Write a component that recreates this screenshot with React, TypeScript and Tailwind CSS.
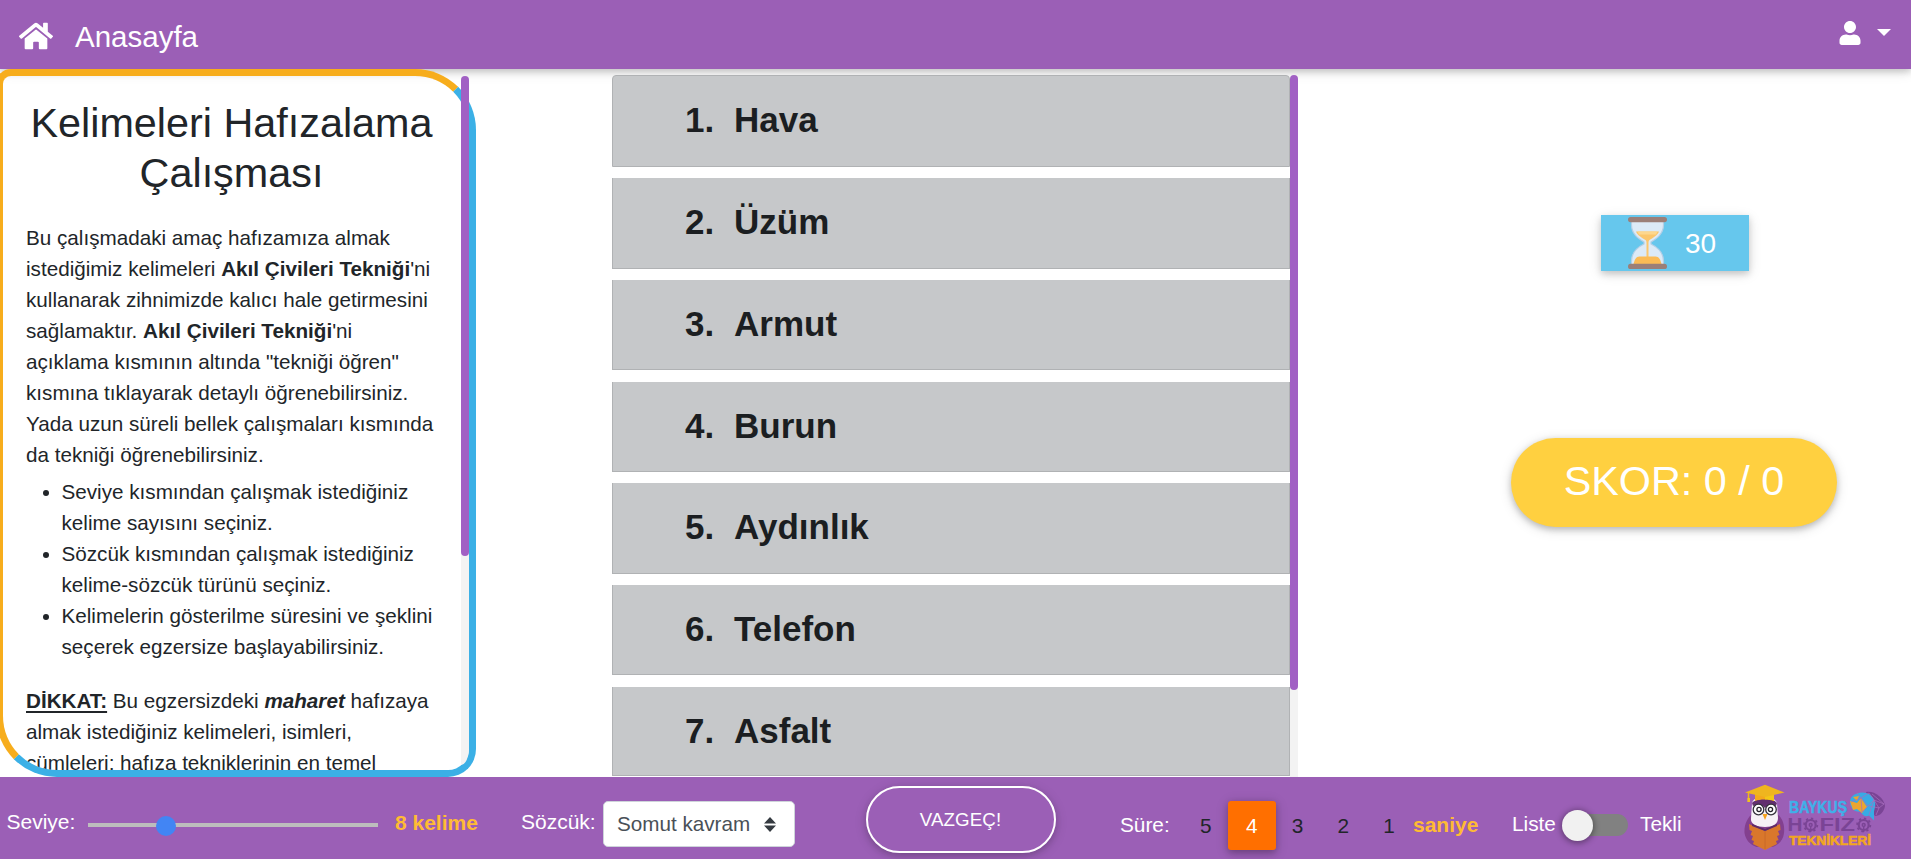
import React from 'react';
import { FaHome, FaUser } from 'react-icons/fa';

const words = ['Hava', 'Üzüm', 'Armut', 'Burun', 'Aydınlık', 'Telefon', 'Asfalt'];
const seconds = [5, 4, 3, 2, 1];

function Hourglass() {
  return (
    <svg className="h-[52px] w-[39px] shrink-0" viewBox="0 0 39 52">
      <path d="M3.500 4h32v4c0 9-7 13.500-12.500 17v2C29 30 35.500 35 35.500 44v4h-32v-4C3.500 35 10 30 16 27v-2C10.500 21.500 3.500 17 3.500 8z" fill="#dceaf7" stroke="#b3cfe6" strokeWidth="1.200" />
      <path d="M8 14.500h23c-1.500 4-6.500 6.500-9.500 8.500-.8.700-1 1.500-1 3V42h-2V26c0-1.500-.2-2.300-1-3-3-2-8-4.500-9.500-8.500z" fill="#fbc66c" />
      <path d="M9.500 14.500h20l-1.500 3H11z" fill="#fdd78e" />
      <path d="M5.500 47c1-4 2.500-7.500 6-7.500h16c3.500 0 5 3.500 6 7.500z" fill="#fbbb55" />
      <rect x="0" y="0" width="39" height="5.200" rx="2.600" fill="#9b7f78" />
      <rect x="0" y="46.800" width="39" height="5.200" rx="2.600" fill="#9b7f78" />
    </svg>
  );
}

function Gear({ x }: { x: number }) {
  return (
    <g transform={`translate(${x} 41)`} fill="none" stroke="#7a4495">
      <circle r="5" strokeWidth="2.200" />
      <circle r="6.600" strokeWidth="1.800" strokeDasharray="2.300 2.880" />
      <circle r="1.400" strokeWidth="1.500" />
      <path d="M0 2v5" strokeWidth="1.400" />
    </g>
  );
}

function Logo() {
  return (
    <svg className="h-[68px] w-[144px] shrink-0" viewBox="0 0 144 68">
      {/* owl body and wings */}
      <path d="M9 29C3 34 0 41 .5 49c1 7 6 12 12 14h16c6-2 11-7 11.500-14C41 40 38 33 32 29z" fill="#83408f" />
      <path d="M8 20c0-4 4-7 12-7s13 3 13 7l1 14c0 6-5 9-13 9S6 40 7 34z" fill="#f6f1f6" />
      <path d="M8 19c4-5 20-6 25 0l-1 3c-4-2-8-2-11 2-3-4-8-4-12-2z" fill="#62306f" />
      <circle cx="14.500" cy="25.500" r="5.300" fill="#fff" stroke="#35323c" strokeWidth="1.300" />
      <circle cx="27" cy="25.500" r="5.300" fill="#fff" stroke="#35323c" strokeWidth="1.300" />
      <circle cx="15" cy="25.500" r="2.100" fill="none" stroke="#25232b" strokeWidth="1.300" />
      <circle cx="26.500" cy="25.500" r="2.100" fill="none" stroke="#25232b" strokeWidth="1.300" />
      <path d="M18.500 30h5L21 36z" fill="#f5a21d" />
      {/* graduation cap */}
      <path d="M11 8h19v9c-5-2-14-2-19 0z" fill="#f5a81c" />
      <path d="M21 9h9v8c-2-1-6-1.500-9-1.500z" fill="#f3c717" />
      <path d="M1 8.500 21 .8l19.500 7.700L21 13z" fill="#efb51f" />
      <path d="M4.500 9v9" stroke="#efb51f" strokeWidth="1.500" />
      <rect x="3.400" y="14" width="2.600" height="4" fill="#efc321" />
      {/* open book */}
      <path d="m5 40 16 7 15-7 .5 6-2.500 1 1.500 4-2.500 1 1.500 4-2.500 1 1 3-12 6-12-6 1-3-2.500-1 1.500-4-2.500-1 1.500-4-2.500-1z" fill="#d9772b" />
      <path d="m8 40 13 5 12-5v2l-12 5-13-5z" fill="#5f2b66" />
      <path d="M21 47v18" stroke="#c4652a" strokeWidth=".8" fill="none" />
      <text x="45" y="29.300" fontFamily="Liberation Sans" fontWeight="700" fontSize="16.500" textLength="58" lengthAdjust="spacingAndGlyphs" fill="#3fb0e8" stroke="#3fb0e8" strokeWidth=".5">BAYKUŞ</text>
      <g fontFamily="Liberation Sans" fontWeight="700" fontSize="17.700" fill="#7a4495">
        <text x="43.500" y="46.500" textLength="15" lengthAdjust="spacingAndGlyphs">H</text>
        <text x="75.500" y="46.500" textLength="35.500" lengthAdjust="spacingAndGlyphs">FIZ</text>
      </g>
      <Gear x={66.7} />
      <Gear x={119.7} />
      <text x="45" y="60.500" fontFamily="Liberation Sans" fontWeight="700" fontSize="12" textLength="82" lengthAdjust="spacingAndGlyphs" fill="#f2a71e" stroke="#f2a71e" strokeWidth=".5">TEKNİKLERİ</text>
      {/* brain */}
      <path d="M122 8c7-2 18 5 19 14-1 6-5 10-10 10l-5-7z" fill="#7a4495" />
      <path d="M106 18c0-6 6-9.500 12-9.500 7 0 12 4 13 10 1 4-1 7-1 10v8l-5-5c-3 2-7 0-8-4-6 1-11-3-11-9.500z" fill="#38abe4" />
      <path d="m106 17 7 2 4-5 6 9-5 6-5-4-4 1zM109 13l6-1-2 5z" fill="#eba52f" />
      <path d="m113 9 4 5 8-5 5 7 10 4M107 18l10-4 7 8 6-6-5 15M117 14l1 14 6-6M130 16l5 8-3 7M128 10l12 10-5 4-10-2" stroke="#a86dbd" strokeWidth=".7" fill="none" />
    </svg>
  );
}

function InfoPanel() {
  return (
    <section className="relative -ml-[4px] h-[708px] w-[480px] shrink-0">
      <div className="h-full overflow-hidden rounded-tl-[15px] rounded-tr-[61px] rounded-br-[28px] rounded-bl-[61px] border-[7px] border-t-[#f7ad1c] border-r-[#3bb0e6] border-b-[#3bb0e6] border-l-[#f7ad1c] pt-[23px] pl-[23px]">
        <div className="w-[415px] text-[20.67px] leading-[31px]">
          <h2 className="-ml-[6px] mb-[23.800px] w-[423px] text-center text-[41.35px] leading-[49.6px]">Kelimeleri Hafızalama<br />Çalışması</h2>
          <div className="whitespace-nowrap">
            Bu çalışmadaki amaç hafızamıza almak<br />
            istediğimiz kelimeleri <b>Akıl Çivileri Tekniği</b>'ni<br />
            kullanarak zihnimizde kalıcı hale getirmesini<br />
            sağlamaktır. <b>Akıl Çivileri Tekniği</b>'ni<br />
            açıklama kısmının altında "tekniği öğren"<br />
            kısmına tıklayarak detaylı öğrenebilirsiniz.<br />
            Yada uzun süreli bellek çalışmaları kısmında<br />
            da tekniği öğrenebilirsiniz.
          </div>
          <ul className="mt-[6px] mb-[23px] list-disc pl-[35.500px] whitespace-nowrap">
            <li>Seviye kısmından çalışmak istediğiniz<br />kelime sayısını seçiniz.</li>
            <li>Sözcük kısmından çalışmak istediğiniz<br />kelime-sözcük türünü seçiniz.</li>
            <li>Kelimelerin gösterilme süresini ve şeklini<br />seçerek egzersize başlayabilirsiniz.</li>
          </ul>
          <p className="whitespace-nowrap">
            <b className="underline decoration-2 underline-offset-[3px]">DİKKAT:</b> Bu egzersizdeki <b className="italic">maharet</b> hafızaya<br />
            almak istediğiniz kelimeleri, isimleri,<br />
            cümleleri; hafıza tekniklerinin en temel
          </p>
        </div>
      </div>
      <div className="absolute top-[7px] right-[7px] h-[689px] w-[8px] rounded-br-[8px_17px] bg-[#f3f3f3]">
        <div className="h-[480px] w-[8px] rounded-full bg-[#a160c4]" />
      </div>
    </section>
  );
}

function WordList() {
  return (
    <section className="mt-[6px] ml-[136px] flex h-[702px] w-[686px] shrink-0">
      <ol className="flex w-[678px] flex-col gap-[11.400px] overflow-hidden">
        {words.map((word, i) => (
          <li
            key={word}
            className="flex h-[90.300px] shrink-0 items-center border-[1.300px] border-t-0 border-[#b0b2b4] bg-[#c6c8ca] pb-[1px] pl-[72px] text-[35px] font-bold text-[#1b1e21] first:h-[92px] first:rounded-t-[4px] first:border-t first:pb-[2px] last:h-[89.600px] last:pb-0"
          >
            <span className="w-[49px]">{i + 1}.</span>
            {word}
          </li>
        ))}
      </ol>
      <div className="w-[8px] bg-[#f3f3f3]">
        <div className="h-[615px] rounded-full bg-[#a160c4]" />
      </div>
    </section>
  );
}

export default function App() {
  return (
    <div className="flex h-[859px] w-[1911px] flex-col overflow-hidden bg-white font-['Liberation_Sans',Arial,sans-serif] text-[#212529]">
      <header className="flex h-[69px] shrink-0 items-start bg-[#9b5fb6] text-white shadow-[0_2.600px_6.500px_rgba(0,0,0,0.16),0_2.600px_13px_rgba(0,0,0,0.12)]">
        <FaHome className="mt-[19px] ml-[19px] h-[34px] w-[34px]" />
        <span className="mt-[20px] ml-[22px] text-[29.5px] leading-[34px]">Anasayfa</span>
        <FaUser className="mt-[21px] ml-auto h-[24px] w-[22px]" />
        <svg className="mt-[29px] mr-[20px] ml-[16px] h-[7px] w-[14px]" viewBox="0 0 14 7"><path d="M0 0h14L7 7z" fill="white" /></svg>
      </header>

      <main className="flex h-[708px] shrink-0">
        <InfoPanel />
        <WordList />
        <aside className="ml-[213px] flex w-[327px] flex-col items-start">
          <div className="mt-[146px] ml-[90px] flex h-[56px] w-[148px] items-center bg-[#66c7ed] pl-[27px] text-[28px] text-white shadow-[0_2.600px_6.500px_rgba(0,0,0,0.16),0_2.600px_13px_rgba(0,0,0,0.12)]">
            <Hourglass />
            <span className="mt-[1px] ml-[18px]">30</span>
          </div>
          <div className="mt-[167px] flex h-[89px] w-[326px] items-center justify-center rounded-full bg-[#ffd040] pb-[2px] text-[41.35px] text-white shadow-[0_2.600px_6.500px_rgba(0,0,0,0.2),0_2.600px_13px_rgba(0,0,0,0.14)]">
            SKOR: 0 / 0
          </div>
        </aside>
      </main>

      <footer className="flex h-[82px] shrink-0 items-start bg-[#9b5fb6] text-[20.8px] leading-[24px] whitespace-nowrap text-white">
        <span className="mt-[33px] ml-[6.500px] w-[81.500px] text-[21px]">Seviye:</span>
        <div className="mt-[39px] flex h-[20px] w-[290px] items-center bg-[linear-gradient(#bdbdbd,#bdbdbd)] bg-[length:100%_4px] bg-[position:0_7px] bg-no-repeat">
          <div className="ml-[68px] size-[20px] rounded-full bg-[#4285f4]" />
        </div>
        <b className="mt-[34px] ml-[17px] w-[126px] text-[21px] text-[#ffbb33]">8 kelime</b>
        <span className="mt-[33px] w-[82px] text-[21px]">Sözcük:</span>
        <div className="mt-[24px] flex h-[46px] w-[192px] items-center rounded-[5px] border border-[#ced4da] bg-white pl-[13px] text-[20.67px] text-[#495057]">
          <span className="w-[147px]">Somut kavram</span>
          <svg className="h-[15px] w-[12px]" viewBox="0 0 12 15"><path d="M6 0l6 6.500H0zM0 8.500h12L6 15z" fill="#343a40" /></svg>
        </div>
        <button className="mt-[9px] ml-[71px] flex h-[67px] w-[190px] items-center justify-center rounded-full border-[2px] border-white pr-[1px] text-[18.72px] shadow-[0_2.600px_6.500px_rgba(0,0,0,0.16),0_2.600px_13px_rgba(0,0,0,0.12)]"><span className="tracking-[0.1px]">VAZGEÇ!</span></button>
        <span className="mt-[36px] ml-[64px] w-[63px]">Süre:</span>
        <div className="mt-[24px] flex h-[49px] w-[229px]">
          {seconds.map((n) =>
            n === 4 ? (
              <span key={n} className="-mx-[1px] flex w-[48px] shrink-0 items-center justify-center rounded-[3px] bg-[#ff6f00] text-white shadow-[0_2.600px_6.500px_rgba(0,0,0,0.2),0_2.600px_13px_rgba(0,0,0,0.16)]">{n}</span>
            ) : (
              <span key={n} className="flex w-[45.750px] shrink-0 items-center justify-center text-[#212529]">{n}</span>
            ),
          )}
        </div>
        <b className="mt-[36px] ml-[1px] w-[99px] text-[21px] text-[#ffbb33]">saniye</b>
        <span className="mt-[35px] w-[54px]">Liste</span>
        <div className="mt-[37px] flex h-[22px] w-[62px] items-center rounded-full bg-[#818181]">
          <div className="-ml-[4px] size-[31px] shrink-0 rounded-full bg-[#f1f1f1] shadow-[0_1px_6px_1px_rgba(0,0,0,0.4)]" />
        </div>
        <span className="mt-[35px] ml-[12px] w-[104px]">Tekli</span>
        <div className="mt-[7px]"><Logo /></div>
      </footer>
    </div>
  );
}
